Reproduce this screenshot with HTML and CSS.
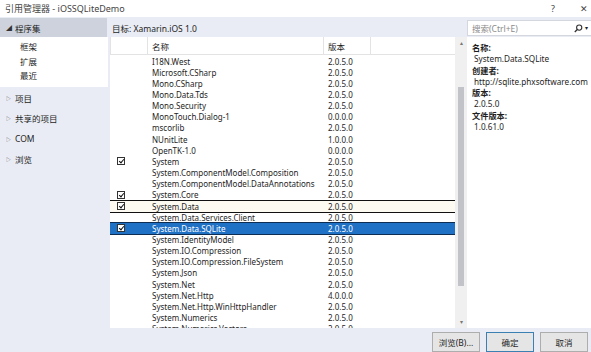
FILE: index.html
```html
<!DOCTYPE html>
<html lang="zh-CN">
<head>
    <meta charset="UTF-8">
    <title>引用管理器</title>
    <link rel="stylesheet" href="styles.css">
</head>
<body>

<section class="titlebar">
    <span class="title">引用管理器 - iOSSQLiteDemo</span>
    <span class="help">?</span>
    <span class="close">✕</span>
</section>

<section class="dialog">
    <div class="side-head"><span class="arrow open">◢</span>程序集</div>
    <div class="target">目标: Xamarin.iOS 1.0</div>
    <div class="search">
        <span class="ph">搜索(Ctrl+E)</span>
        <svg class="mag" width="9" height="9" viewBox="0 0 9 9"><circle cx="5.2" cy="3.6" r="2.6" fill="none" stroke="#333" stroke-width="1.1"/><line x1="3.3" y1="5.5" x2="0.8" y2="8" stroke="#333" stroke-width="1.3"/></svg>
        <span class="drop">▾</span>
    </div>

    <div class="side">
        <div class="sub">
            <div>框架</div>
            <div>扩展</div>
            <div>最近</div>
        </div>
        <div class="node"><span class="arrow">▷</span>项目</div>
        <div class="node"><span class="arrow">▷</span>共享的项目</div>
        <div class="node"><span class="arrow">▷</span>COM</div>
        <div class="node"><span class="arrow">▷</span>浏览</div>
    </div>

    <div class="list">
        <div class="head">
            <div class="c-chk"></div>
            <div class="c-name">名称</div>
            <div class="c-ver">版本</div>
            <div class="c-rest"></div>
        </div>
        <div class="rows">
            <div class="row"><span class="c-chk"></span><span class="c-name">I18N.West</span><span class="c-ver">2.0.5.0</span></div>
            <div class="row"><span class="c-chk"></span><span class="c-name">Microsoft.CSharp</span><span class="c-ver">2.0.5.0</span></div>
            <div class="row"><span class="c-chk"></span><span class="c-name">Mono.CSharp</span><span class="c-ver">2.0.5.0</span></div>
            <div class="row"><span class="c-chk"></span><span class="c-name">Mono.Data.Tds</span><span class="c-ver">2.0.5.0</span></div>
            <div class="row"><span class="c-chk"></span><span class="c-name">Mono.Security</span><span class="c-ver">2.0.5.0</span></div>
            <div class="row"><span class="c-chk"></span><span class="c-name">MonoTouch.Dialog-1</span><span class="c-ver">0.0.0.0</span></div>
            <div class="row"><span class="c-chk"></span><span class="c-name">mscorlib</span><span class="c-ver">2.0.5.0</span></div>
            <div class="row"><span class="c-chk"></span><span class="c-name">NUnitLite</span><span class="c-ver">1.0.0.0</span></div>
            <div class="row"><span class="c-chk"></span><span class="c-name">OpenTK-1.0</span><span class="c-ver">0.0.0.0</span></div>
            <div class="row"><span class="c-chk"><i class="box on"></i></span><span class="c-name">System</span><span class="c-ver">2.0.5.0</span></div>
            <div class="row"><span class="c-chk"></span><span class="c-name">System.ComponentModel.Composition</span><span class="c-ver">2.0.5.0</span></div>
            <div class="row"><span class="c-chk"></span><span class="c-name">System.ComponentModel.DataAnnotations</span><span class="c-ver">2.0.5.0</span></div>
            <div class="row"><span class="c-chk"><i class="box on"></i></span><span class="c-name">System.Core</span><span class="c-ver">2.0.5.0</span></div>
            <div class="row focus"><span class="c-chk"><i class="box on"></i></span><span class="c-name">System.Data</span><span class="c-ver">2.0.5.0</span></div>
            <div class="row"><span class="c-chk"></span><span class="c-name">System.Data.Services.Client</span><span class="c-ver">2.0.5.0</span></div>
            <div class="row selected"><span class="c-chk"><i class="box on"></i></span><span class="c-name">System.Data.SQLite</span><span class="c-ver">2.0.5.0</span></div>
            <div class="row"><span class="c-chk"></span><span class="c-name">System.IdentityModel</span><span class="c-ver">2.0.5.0</span></div>
            <div class="row"><span class="c-chk"></span><span class="c-name">System.IO.Compression</span><span class="c-ver">2.0.5.0</span></div>
            <div class="row"><span class="c-chk"></span><span class="c-name">System.IO.Compression.FileSystem</span><span class="c-ver">2.0.5.0</span></div>
            <div class="row"><span class="c-chk"></span><span class="c-name">System.Json</span><span class="c-ver">2.0.5.0</span></div>
            <div class="row"><span class="c-chk"></span><span class="c-name">System.Net</span><span class="c-ver">2.0.5.0</span></div>
            <div class="row"><span class="c-chk"></span><span class="c-name">System.Net.Http</span><span class="c-ver">4.0.0.0</span></div>
            <div class="row"><span class="c-chk"></span><span class="c-name">System.Net.Http.WinHttpHandler</span><span class="c-ver">2.0.5.0</span></div>
            <div class="row"><span class="c-chk"></span><span class="c-name">System.Numerics</span><span class="c-ver">2.0.5.0</span></div>
            <div class="row"><span class="c-chk"></span><span class="c-name">System.Numerics.Vectors</span><span class="c-ver">2.0.5.0</span></div>
        </div>
    </div>

    <div class="scrollbar">
        <span class="up">▴</span>
        <div class="track"><div class="thumb"></div></div>
        <span class="down">▾</span>
    </div>

    <div class="details">
        <div class="label">名称:</div>
        <div class="value">System.Data.SQLite</div>
        <div class="label">创建者:</div>
        <div class="value">http://sqlite.phxsoftware.com</div>
        <div class="label">版本:</div>
        <div class="value">2.0.5.0</div>
        <div class="label">文件版本:</div>
        <div class="value">1.0.61.0</div>
    </div>

    <div class="buttons">
        <button>浏览(B)...</button>
        <button class="default">确定</button>
        <button>取消</button>
    </div>
</section>

</body>
</html>
```

FILE: styles.css
```css
* {
    box-sizing: border-box;
}
body {
    margin: 0;
    width: 591px;
    height: 352px;
    overflow: hidden;
    font-family: "Noto Sans", "Noto Sans CJK SC", sans-serif;
    font-size: 8.5px;
    color: #1e1e1e;
    background: #e9ecf4;
}
.titlebar {
    height: 17px;
    background: #fff;
    display: flex;
    align-items: center;
    padding-left: 5px;
    color: #444;
    font-size: 9px;
}
.title {
    flex: 1;
}
.help {
    width: 29px;
    font-size: 9px;
}
.close {
    width: 11px;
    font-size: 9px;
}
.dialog {
    display: grid;
    grid-template-columns: 110px 345px 12px 124px;
    grid-template-rows: 20px 291px 24px;
    height: 335px;
}
.side-head {
    width: 107px;
    margin-top: 1px;
    background: #cdd2dd;
    display: flex;
    align-items: center;
    padding-left: 6px;
}
.arrow {
    display: inline-block;
    width: 9px;
    font-size: 5px;
    color: #555;
}
.arrow.open {
    font-size: 6px;
    color: #333;
}
.target {
    grid-column: 2 / 4;
    display: flex;
    align-items: center;
    padding-left: 2px;
    padding-top: 2px;
}
.search {
    margin: 3px 0 1px 0;
    background: #fff;
    border: 1px solid #d4d7de;
    border-right: none;
    display: flex;
    align-items: center;
    padding-left: 4px;
}
.ph {
    flex: 1;
    color: #8a8a8a;
}
.mag {
    margin-right: 2px;
}
.drop {
    width: 6px;
    font-size: 6px;
}
.side {
    min-height: 0;
}
.sub {
    width: 108px;
    height: 50px;
    background: #fff;
    padding: 3px 0 0 20px;
    line-height: 14.5px;
}
.node {
    height: 19.3px;
    display: flex;
    align-items: center;
    padding-left: 6px;
    margin-top: 1px;
}
.list {
    background: #fff;
    overflow: hidden;
    min-height: 0;
    display: flex;
    flex-direction: column;
    font-size: 8px;
}
.head {
    height: 18px;
    display: flex;
    border-bottom: 1px solid #e3e3e3;
    flex: none;
    font-size: 8.5px;
}
.head div {
    border-right: 1px solid #e3e3e3;
    padding: 3px 0 0 4px;
}
.c-chk {
    width: 38px;
    flex: none;
    display: flex;
    align-items: center;
    padding-left: 7px;
}
.head .c-chk {
    border-left: 1px solid #e3e3e3;
}
.c-name {
    width: 176px;
    flex: none;
    padding-left: 4px;
}
.c-ver {
    width: 47px;
    flex: none;
    padding-left: 4px;
}
.c-rest {
    flex: 1;
}
.head .c-rest {
    border-right: none;
}
.rows {
    padding-top: 0.5px;
}
.row {
    height: 11.17px;
    line-height: 11.17px;
    display: flex;
    white-space: nowrap;
}
.row .c-chk {
    padding-left: 7px;
}
.row.focus {
    background: #fdfaf2;
    outline: 1.5px solid #111;
    position: relative;
}
.row.selected {
    background: #1f71c6;
    color: #fff;
    outline: 1.5px solid #0d2e52;
    position: relative;
}
.box {
    display: block;
    width: 8px;
    height: 8px;
    border: 1px solid #333;
    background: #fff;
    position: relative;
}
.box.on::after {
    content: "";
    position: absolute;
    left: 1.5px;
    top: 0;
    width: 2px;
    height: 4px;
    border: solid #111;
    border-width: 0 1.3px 1.3px 0;
    transform: rotate(40deg);
}
.scrollbar {
    background: #f0f0f0;
    min-height: 0;
    display: flex;
    flex-direction: column;
    align-items: center;
}
.up, .down {
    height: 12px;
    font-size: 6px;
    color: #777;
    line-height: 12px;
}
.track {
    flex: 1;
    width: 100%;
    padding: 38px 3px 30px 3px;
}
.thumb {
    height: 100%;
    background: #c2c3c9;
}
.details {
    background: #fff;
    padding: 5px 0 0 5px;
    line-height: 11.3px;
    font-size: 8.2px;
    white-space: nowrap;
    overflow: hidden;
}
.label {
    font-weight: bold;
}
.value {
    padding-left: 2px;
}
.buttons {
    grid-column: 1 / 5;
    display: flex;
    justify-content: flex-end;
    align-items: flex-end;
    gap: 6px;
    padding-right: 3px;
}
button {
    width: 48px;
    height: 20px;
    font-family: "Noto Sans", "Noto Sans CJK SC", sans-serif;
    font-size: 8.5px;
    color: #1e1e1e;
    background: #e5e5e5;
    border: 1px solid #adadad;
    padding: 0;
}
button.default {
    border-color: #3c7fb1;
}
```
